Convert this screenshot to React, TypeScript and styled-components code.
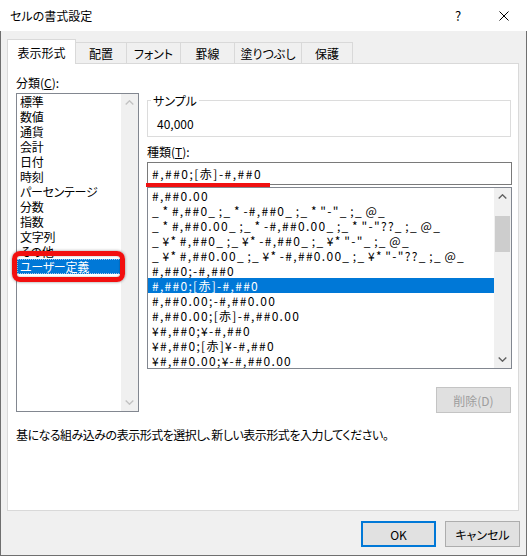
import React from "react";
import styled, { createGlobalStyle } from "styled-components";

const GlobalStyle = createGlobalStyle`
	html, body {
		margin: 0;
		padding: 0;
		background: #fff;
	}
	body {
		font-family: "Noto Sans CJK JP", "Noto Sans", sans-serif;
		font-size: 12px;
		color: #000;
		font-feature-settings: "palt";
	}
`;

const Window = styled.div`
	width: 527px;
	height: 556px;
	display: flex;
	flex-direction: column;
	background: #fff;
`;

const TitleBar = styled.div`
	height: 31px;
	flex: none;
	display: flex;
	align-items: center;
	padding-left: 10px;
`;

const Title = styled.div`
	flex: 1;
	line-height: 15px;
`;

const TitleButton = styled.div`
	width: 46px;
	height: 31px;
	display: flex;
	align-items: center;
	justify-content: center;
	font-size: 13px;
`;

const Body = styled.div`
	flex: 1;
	display: flex;
	flex-direction: column;
	background: #f0f0f0;
	border: 1px solid #6f6f6f;
	border-top: none;
	padding: 8px 7px 0 6px;
`;

const TabRow = styled.div`
	height: 24px;
	display: flex;
	align-items: flex-end;
	position: relative;
	z-index: 1;
`;

const Tab = styled.div<{ $w: number; $active?: boolean }>`
	box-sizing: border-box;
	width: ${(p) => p.$w}px;
	height: ${(p) => (p.$active ? 25 : 21)}px;
	margin-bottom: ${(p) => (p.$active ? -1 : 0)}px;
	margin-left: -1px;
	background: ${(p) => (p.$active ? "#fff" : "#f0f0f0")};
	border: 1px solid #d9d9d9;
	border-bottom: none;
	display: flex;
	align-items: center;
	justify-content: center;
	line-height: 15px;
	position: relative;
	z-index: ${(p) => (p.$active ? 2 : 1)};
	&:first-child {
		margin-left: 0;
	}
`;

const Panel = styled.div`
	position: relative;
	box-sizing: border-box;
	height: 448px;
	flex: none;
	background: #fff;
	border: 1px solid #d9d9d9;
	padding: 11px 6px 0 8px;
	display: flex;
	flex-direction: column;
`;

const Columns = styled.div`
	display: grid;
	grid-template-columns: 123px 365px;
	column-gap: 8px;
	align-items: start;
`;

const Column = styled.div`
	display: flex;
	flex-direction: column;
`;

const Label = styled.div<{ $gap?: number }>`
	line-height: 15px;
	margin-top: ${(p) => p.$gap ?? 0}px;
`;

const Mnemonic = styled.span`
	text-decoration: underline;
	text-underline-offset: 1px;
`;

const ListBox = styled.div<{ $h: number; $gap: number }>`
	box-sizing: border-box;
	height: ${(p) => p.$h}px;
	margin-top: ${(p) => p.$gap}px;
	border: 1px solid #828790;
	background: #fff;
	display: flex;
	overflow: hidden;
`;

const Items = styled.div`
	flex: 1;
	min-width: 0;
	display: flex;
	flex-direction: column;
`;

const CategoryItem = styled.div<{ $selected?: boolean }>`
	height: 15px;
	flex: none;
	line-height: 15px;
	padding-left: 3px;
	white-space: nowrap;
	letter-spacing: -0.3px;
	background: ${(p) => (p.$selected ? "#0078d7" : "transparent")};
	color: ${(p) => (p.$selected ? "#fff" : "#000")};
	outline: ${(p) => (p.$selected ? "1px dotted #9fc6ee" : "none")};
	outline-offset: -1px;
`;

const FormatItem = styled.div<{ $selected?: boolean }>`
	height: 15px;
	flex: none;
	line-height: 15px;
	padding-left: 4px;
	white-space: pre;
	letter-spacing: 1.3px;
	word-spacing: -1.5px;
	background: ${(p) => (p.$selected ? "#0078d7" : "transparent")};
	color: ${(p) => (p.$selected ? "#fff" : "#000")};
`;

const ScrollTrack = styled.div`
	width: 17px;
	flex: none;
	background: #f0f0f0;
	display: flex;
	flex-direction: column;
`;

const ArrowBox = styled.div`
	height: 17px;
	flex: none;
	display: flex;
	align-items: center;
	justify-content: center;
`;

const Thumb = styled.div<{ $offset: number; $size: number }>`
	flex: none;
	margin: ${(p) => p.$offset}px 1px 0;
	height: ${(p) => p.$size}px;
	background: #cdcdcd;
`;

const TrackFill = styled.div`
	flex: 1;
`;

const SampleGroup = styled.fieldset`
	margin: 18px 1px 0 0;
	padding: 0 9px 5px;
	border: 1px solid #dcdcdc;
	min-width: 0;
`;

const SampleLegend = styled.legend`
	margin-left: -6px;
	padding: 0 2px;
	line-height: 15px;
`;

const SampleValue = styled.div`
	margin-top: 8px;
	line-height: 15px;
`;

const FormatInput = styled.div`
	box-sizing: border-box;
	height: 23px;
	margin-top: 3px;
	border: 1px solid #7a7a7a;
	padding-left: 4px;
	display: flex;
	align-items: center;
	letter-spacing: 1.5px;
	white-space: pre;
`;

const Button = styled.div<{ $variant?: "default" | "disabled" }>`
	box-sizing: border-box;
	width: 75px;
	height: 26px;
	display: flex;
	align-items: center;
	justify-content: center;
	background: ${(p) => (p.$variant === "disabled" ? "#e0e0e0" : "#e1e1e1")};
	border: ${(p) =>
		p.$variant === "default"
			? "2px solid #0078d7"
			: p.$variant === "disabled"
			? "1px solid #c4c4c4"
			: "1px solid #adadad"};
	color: ${(p) => (p.$variant === "disabled" ? "#9d9d9d" : "#000")};
	line-height: 15px;
`;

const DeleteButton = styled(Button)`
	align-self: flex-end;
	margin: 18px 1px 0 0;
`;

const Description = styled.div`
	margin-top: 14px;
	line-height: 15px;
	white-space: nowrap;
	letter-spacing: -0.5px;
`;

const Footer = styled.div`
	display: flex;
	justify-content: flex-end;
	gap: 9px;
	margin: 10px -1px 0 0;
`;

const RedUnderline = styled.div`
	position: absolute;
	left: 138px;
	top: 119px;
	width: 124px;
	height: 4px;
	background: #f01010;
`;

const RedFrame = styled.div`
	position: absolute;
	left: 4px;
	top: 187px;
	width: 113px;
	height: 31px;
	box-sizing: border-box;
	border: 5px solid #f20f0f;
	border-radius: 8px;
	box-shadow: 0 0 3px rgba(0, 0, 0, 0.45), inset 0 0 2px rgba(0, 0, 0, 0.35);
`;

const Chevron = ({ up, color }: { up?: boolean; color: string }) => (
	<svg width="9" height="5" viewBox="0 0 9 5">
		<path
			d={up ? "M0.7 4.5 L4.5 0.8 L8.3 4.5" : "M0.7 0.5 L4.5 4.2 L8.3 0.5"}
			fill="none"
			stroke={color}
			strokeWidth="1.4"
		/>
	</svg>
);

const CloseIcon = () => (
	<svg width="10" height="10" viewBox="0 0 10 10">
		<path d="M0.5 0.5 L9.5 9.5 M9.5 0.5 L0.5 9.5" stroke="#000" strokeWidth="1" />
	</svg>
);

const tabs = [
	{ label: "表示形式", w: 69 },
	{ label: "配置", w: 52 },
	{ label: "フォント", w: 55 },
	{ label: "罫線", w: 55 },
	{ label: "塗りつぶし", w: 68 },
	{ label: "保護", w: 52 },
];

const categories = [
	"標準",
	"数値",
	"通貨",
	"会計",
	"日付",
	"時刻",
	"パーセンテージ",
	"分数",
	"指数",
	"文字列",
	"その他",
	"ユーザー定義",
];

const formats = [
	"#,##0.00",
	'_ * #,##0_ ;_ * -#,##0_ ;_ * "-"_ ;_ @_',
	'_ * #,##0.00_ ;_ * -#,##0.00_ ;_ * "-"??_ ;_ @_',
	'_ ¥* #,##0_ ;_ ¥* -#,##0_ ;_ ¥* "-"_ ;_ @_',
	'_ ¥* #,##0.00_ ;_ ¥* -#,##0.00_ ;_ ¥* "-"??_ ;_ @_',
	"#,##0;-#,##0",
	"#,##0;[赤]-#,##0",
	"#,##0.00;-#,##0.00",
	"#,##0.00;[赤]-#,##0.00",
	"¥#,##0;¥-#,##0",
	"¥#,##0;[赤]¥-#,##0",
	"¥#,##0.00;¥-#,##0.00",
];

export default function App() {
	return (
		<>
			<GlobalStyle />
			<Window>
				<TitleBar>
					<Title>セルの書式設定</Title>
					<TitleButton>?</TitleButton>
					<TitleButton>
						<CloseIcon />
					</TitleButton>
				</TitleBar>
				<Body>
					<TabRow>
						{tabs.map((t, i) => (
							<Tab key={t.label} $w={t.w} $active={i === 0}>
								{t.label}
							</Tab>
						))}
					</TabRow>
					<Panel>
						<Columns>
							<Column>
								<Label>
									分類(<Mnemonic>C</Mnemonic>):
								</Label>
								<ListBox $h={319} $gap={3}>
									<Items>
										{categories.map((c, i) => (
											<CategoryItem key={c} $selected={i === 11}>
												{c}
											</CategoryItem>
										))}
									</Items>
									<ScrollTrack>
										<ArrowBox>
											<Chevron up color="#c2c2c2" />
										</ArrowBox>
										<TrackFill />
										<ArrowBox>
											<Chevron color="#c2c2c2" />
										</ArrowBox>
									</ScrollTrack>
								</ListBox>
							</Column>
							<Column>
								<SampleGroup>
									<SampleLegend>サンプル</SampleLegend>
									<SampleValue>40,000</SampleValue>
								</SampleGroup>
								<Label $gap={7}>
									種類(<Mnemonic>T</Mnemonic>):
								</Label>
								<FormatInput>#,##0;[赤]-#,##0</FormatInput>
								<ListBox $h={182} $gap={2}>
									<Items>
										{formats.map((f, i) => (
											<FormatItem key={f} $selected={i === 6}>
												{f}
											</FormatItem>
										))}
									</Items>
									<ScrollTrack>
										<ArrowBox>
											<Chevron up color="#606060" />
										</ArrowBox>
										<Thumb $offset={11} $size={36} />
										<TrackFill />
										<ArrowBox>
											<Chevron color="#606060" />
										</ArrowBox>
									</ScrollTrack>
								</ListBox>
								<DeleteButton $variant="disabled">削除(D)</DeleteButton>
							</Column>
						</Columns>
						<Description>
							基になる組み込みの表示形式を選択し、新しい表示形式を入力してください。
						</Description>
						<RedUnderline />
						<RedFrame />
					</Panel>
					<Footer>
						<Button $variant="default">OK</Button>
						<Button>キャンセル</Button>
					</Footer>
				</Body>
			</Window>
		</>
	);
}
